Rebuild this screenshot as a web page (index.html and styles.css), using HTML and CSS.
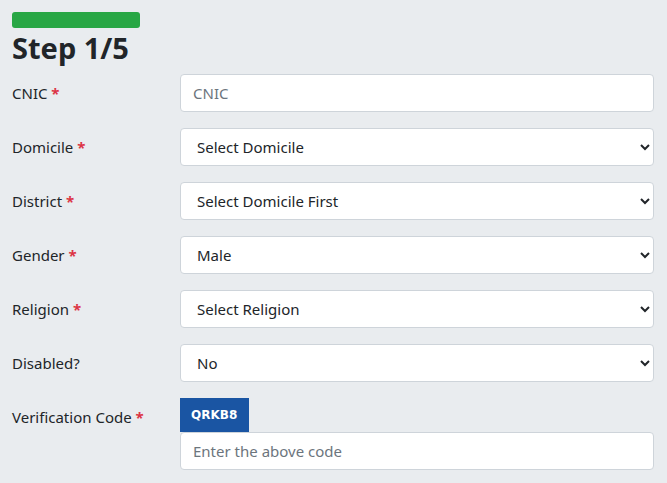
FILE: index.html
```html
<!DOCTYPE html>
<html lang="en">
<head>
  <meta charset="UTF-8">
  <title>Application Form - Step 1</title>
  <link rel="stylesheet" href="styles.css">
</head>
<body>
  <div class="progress"><div class="progress-bar"></div></div>
  <h1>Step 1/5</h1>

  <form class="step-form">
    <div class="row">
      <label for="cnic">CNIC <span class="req">*</span></label>
      <input type="text" id="cnic" placeholder="CNIC">
    </div>
    <div class="row">
      <label for="domicile">Domicile <span class="req">*</span></label>
      <select id="domicile"><option>Select Domicile</option></select>
    </div>
    <div class="row">
      <label for="district">District <span class="req">*</span></label>
      <select id="district"><option>Select Domicile First</option></select>
    </div>
    <div class="row">
      <label for="gender">Gender <span class="req">*</span></label>
      <select id="gender"><option>Male</option><option>Female</option></select>
    </div>
    <div class="row">
      <label for="religion">Religion <span class="req">*</span></label>
      <select id="religion"><option>Select Religion</option></select>
    </div>
    <div class="row">
      <label for="disabled">Disabled?</label>
      <select id="disabled"><option>No</option><option>Yes</option></select>
    </div>
    <div class="row captcha-row">
      <label for="code">Verification Code <span class="req">*</span></label>
      <div class="captcha">
        <span class="captcha-code">QRKB8</span>
        <input type="text" id="code" placeholder="Enter the above code">
      </div>
    </div>
  </form>
</body>
</html>
```

FILE: styles.css
```css
/* ========== GLOBAL ========== */
* {
  box-sizing: border-box;
  margin: 0;
  padding: 0;
}

body {
  font-family: "Noto Sans", "Open Sans", sans-serif;
  background: #e9ecef;
  color: #212529;
  padding: 12px 13px 12px 12px;
}

/* ========== HEADER ========== */
.progress {
  width: 128px;
  height: 16px;
  background: #28a745;
  border-radius: 3px;
}

.progress-bar {
  height: 100%;
}

h1 {
  font-size: 29px;
  font-weight: 700;
  line-height: 1.2;
  margin: 3px 0 8px;
}

/* ========== FORM ========== */
.row {
  display: grid;
  grid-template-columns: 168px 1fr;
  align-items: center;
  margin-bottom: 16px;
}

label {
  font-size: 15px;
}

.req {
  color: #dc3545;
  font-weight: 700;
}

input, select {
  width: 100%;
  height: 38px;
  font-family: inherit;
  font-size: 15px;
  color: #212529;
  background: #fff;
  border: 1px solid #ced4da;
  border-radius: 4px;
  padding: 0 12px;
}

input::placeholder {
  color: #6c757d;
}

.captcha-row {
  align-items: start;
}

.captcha-row label {
  padding-top: 9px;
}

.captcha {
  display: flex;
  flex-direction: column;
  align-items: flex-start;
}

.captcha-code {
  background: #1a55a3;
  color: #fff;
  font-family: "DejaVu Sans", sans-serif;
  font-size: 12px;
  font-weight: 700;
  line-height: 16px;
  padding: 9px 12px 9px 11px;
}
```
